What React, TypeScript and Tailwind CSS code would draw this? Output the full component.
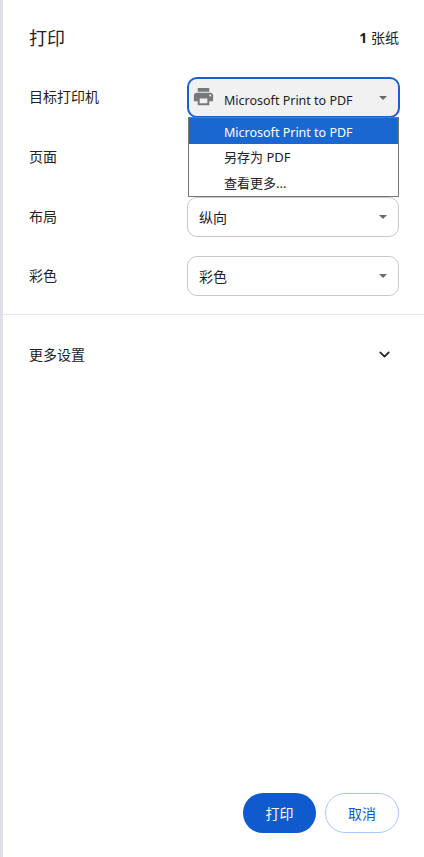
import { ChevronDown } from 'lucide-react';

const font = { fontFamily: '"Noto Sans", "Noto Sans CJK SC", sans-serif' };

function Caret() {
  return (
    <svg width="8" height="4" viewBox="0 0 8 4" className="absolute right-[11px] top-1/2 -mt-[2px]">
      <path d="M0 0h8L4 4z" fill="#6b6b6f" />
    </svg>
  );
}

function PrinterIcon() {
  return (
    <svg width="23" height="23" viewBox="0 0 24 24" className="shrink-0 -mt-[2px]">
      <path
        fill="#77787c"
        d="M19 8H5c-1.66 0-3 1.34-3 3v6h4v4h12v-4h4v-6c0-1.66-1.34-3-3-3zm-3 11H8v-5h8v5zm3-7c-.55 0-1-.45-1-1s.45-1 1-1 1 .45 1 1-.45 1-1 1zm-1-9H6v4h12V3z"
      />
    </svg>
  );
}

function Row({ label, value, className }: { label: string; value: string; className: string }) {
  return (
    <div className={`flex items-center ${className}`}>
      <div className="-mt-[2px] w-[184px] pl-[26px] text-[14px] text-[#202124]">{label}</div>
      <div className="relative h-[40px] w-[212px] rounded-[10px] border border-[#c8c8cb] pl-[11px] pt-[10px] text-[14px] leading-[20px] text-[#202124]">
        {value}
        <Caret />
      </div>
    </div>
  );
}

export default function App() {
  return (
    <div className="relative flex h-[857px] w-[424px] flex-col overflow-hidden border-l-[3px] border-[#dfe0e6] bg-white" style={font}>
      <div className="flex items-center justify-between pl-[26px] pr-[25px] pt-[25px]">
        <div className="text-[18px] leading-[27px] text-[#202124]">打印</div>
        <div className="-mt-[2px] text-[14px] text-[#202124]">
          <span className="font-bold">1</span> 张纸
        </div>
      </div>

      <div className="relative mt-[25px] flex items-center">
        <div className="-mt-[2px] w-[184px] pl-[26px] text-[14px] text-[#202124]">目标打印机</div>
        <div className="relative flex h-[41px] w-[213px] items-center rounded-[10px] border-2 border-[#1a5fd0] bg-[#f1f1f1] pl-[3px] text-[12.5px] text-[#202124]">
          <PrinterIcon />
          <span className="ml-[9px] mt-[8px]">Microsoft Print to PDF</span>
          <Caret />
        </div>
      </div>

      <div className="relative mt-[19px] flex h-[40px] items-center">
        <div className="-mt-[2px] pl-[26px] text-[14px] text-[#202124]">页面</div>
      </div>

      <div className="absolute left-[185px] top-[117px] z-10 w-[211px] border border-[#767676] bg-white text-[13px] text-[#202124]">
        <div className="flex h-[26px] items-center bg-[#1a67d2] pl-[35px] pt-[4px] text-[12.5px] text-white">Microsoft Print to PDF</div>
        <div className="flex h-[26px] items-center pl-[35px] pt-[2px]">另存为 PDF</div>
        <div className="flex h-[26px] items-center pl-[35px] pt-[2px]">查看更多...</div>
      </div>

      <Row label="布局" value="纵向" className="mt-[20px]" />
      <Row label="彩色" value="彩色" className="mt-[19px]" />

      <div className="mt-[18px] h-px bg-[#e8e8e8]" />

      <div className="flex items-center justify-between pl-[26px] pr-[31px] pt-[29px]">
        <div className="text-[14px] text-[#202124]">更多设置</div>
        <ChevronDown size={17} strokeWidth={2.4} className="text-[#202124]" />
      </div>

      <div className="mt-auto flex justify-end gap-[9px] pb-[24px] pr-[25px]">
        <button className="h-[40px] w-[73px] rounded-full bg-[#0f5bce] text-[14px] text-white">打印</button>
        <button className="h-[40px] w-[74px] rounded-full border border-[#a8c7fa] bg-white text-[14px] text-[#0f5bce]">取消</button>
      </div>
    </div>
  );
}
